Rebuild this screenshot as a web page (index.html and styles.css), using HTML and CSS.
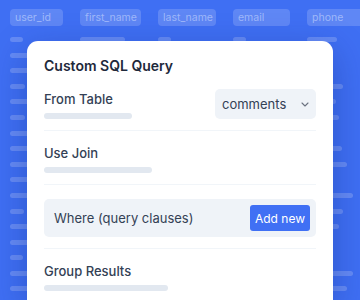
FILE: index.html
```html
<!DOCTYPE html>
<html lang="en">
<head>
  <meta charset="UTF-8">
  <meta name="viewport" content="width=device-width, initial-scale=1.0">
  <title>Custom SQL Query</title>
  <link rel="stylesheet" href="styles.css">
</head>
<body>

  <div class="table-bg">
    <div class="col" data-bars="13,40,44,15,38,15,42,36,40,44,38,14,40,36,13,42,38">
      <div class="col-head">user_id</div>
    </div>
    <div class="col" data-bars="45,30,38,26,44,32,20,40,36,28,42,34,30,44,26,38,30">
      <div class="col-head">first_name</div>
    </div>
    <div class="col" data-bars="13,36,28,40,22,34,44,30,26,38,32,20,42,28,36,30,40">
      <div class="col-head">last_name</div>
    </div>
    <div class="col" data-bars="13,30,40,24,36,28,42,20,34,40,26,38,30,22,44,32,36">
      <div class="col-head">email</div>
    </div>
    <div class="col" data-bars="30,18,20,36,29,32,20,35,40,22,46,36,32,20,22,46,40">
      <div class="col-head">phone</div>
    </div>
  </div>

  <div class="card">
    <h1 class="card-title">Custom SQL Query</h1>

    <div class="section">
      <div class="row">
        <div class="field">
          <div class="label">From Table</div>
          <div class="skeleton" style="width: 88px"></div>
        </div>
        <div class="select">
          <span>comments</span>
          <svg width="8" height="5" viewBox="0 0 8 5"><path d="M1 1l3 3 3-3" fill="none" stroke="#6b7280" stroke-width="1.1" stroke-linecap="round" stroke-linejoin="round"/></svg>
        </div>
      </div>
    </div>

    <div class="section">
      <div class="label">Use Join</div>
      <div class="skeleton" style="width: 108px"></div>
    </div>

    <div class="section where-section">
      <div class="where">
        <span>Where (query clauses)</span>
        <button class="btn">Add new</button>
      </div>
    </div>

    <div class="section">
      <div class="label">Group Results</div>
      <div class="skeleton" style="width: 124px"></div>
    </div>
  </div>

  <script>
    // fill the background columns with fake row bars
    var cols = document.querySelectorAll('.col');
    for (let i = 0; i < cols.length; i++) {
      var widths = cols[i].getAttribute('data-bars').split(',');
      for (let j = 0; j < widths.length; j++) {
        var bar = document.createElement('div');
        bar.classList.add('cell');
        bar.style.width = widths[j] + 'px';
        cols[i].append(bar);
      }
    }
  </script>
</body>
</html>
```

FILE: styles.css
```css
:root {
  --blue: #3f6ff3;
  --ink: #1e293b;
  --text: #334155;
  --line: #f1f5f9;
  --soft: #eff3f8;
  --skeleton: #e2e8f0;
}

body {
  margin: 0px;
  width: 360px;
  height: 300px;
  overflow: hidden;
  position: relative;
  background-color: var(--blue);
  font-family: 'Inter', sans-serif;
}

.table-bg {
  display: flex;
  gap: 17px;
  padding: 9px 0 0 10px;
  height: 291px;
  overflow: hidden;
}

.col {
  display: flex;
  flex-direction: column;
  gap: 10.6px;
}

.col-head {
  height: 17px;
  line-height: 17px;
  padding: 0 5px;
  border-radius: 4px;
  font-size: 10.5px;
  color: rgba(215, 225, 255, 0.55);
  background-color: rgba(255, 255, 255, 0.17);
  white-space: nowrap;
  margin-bottom: 0.4px;
}

.col:nth-child(1) .col-head { width: 43px; }
.col:nth-child(2) .col-head { width: 51px; }
.col:nth-child(3) .col-head { width: 48px; }
.col:nth-child(4) .col-head { width: 47px; }
.col:nth-child(5) .col-head { width: 60px; }

.cell {
  height: 5px;
  flex-shrink: 0;
  border-radius: 3px;
  background-color: rgba(255, 255, 255, 0.2);
}

.card {
  position: absolute;
  top: 41px;
  left: 27px;
  width: 306px;
  height: 259px;
  box-sizing: border-box;
  padding: 15px 17px 0;
  background: white;
  border-radius: 11px 11px 0 0;
  box-shadow: 0 10px 34px rgba(18, 38, 120, 0.35);
  overflow: hidden;
}

.card-title {
  margin: 0;
  font-size: 14px;
  line-height: 20px;
  font-weight: 600;
  color: var(--ink);
}

.section {
  padding: 13px 0 11px;
  border-bottom: 1px solid var(--line);
}

.section:last-child { border-bottom: none; }

.where-section { padding: 14px 0 11px; }

.row {
  display: flex;
  justify-content: space-between;
  align-items: center;
}

.label {
  font-size: 13px;
  line-height: 18px;
  font-weight: 500;
  color: var(--text);
}

.skeleton {
  height: 6px;
  margin-top: 5px;
  border-radius: 3px;
  background-color: var(--skeleton);
}

.select {
  width: 101px;
  height: 30px;
  box-sizing: border-box;
  padding: 0 7px;
  display: flex;
  align-items: center;
  justify-content: space-between;
  border-radius: 5px;
  background-color: var(--soft);
  font-size: 13px;
  color: var(--text);
}

.where {
  height: 38px;
  box-sizing: border-box;
  padding: 0 6px 0 10px;
  display: flex;
  align-items: center;
  justify-content: space-between;
  border-radius: 5px;
  background-color: var(--soft);
  font-size: 13px;
  color: var(--text);
}

.btn {
  width: 60px;
  height: 26px;
  padding: 0;
  border: none;
  border-radius: 3px;
  background-color: #4070f4;
  color: white;
  font-family: 'Inter', sans-serif;
  font-size: 12px;
}
```
